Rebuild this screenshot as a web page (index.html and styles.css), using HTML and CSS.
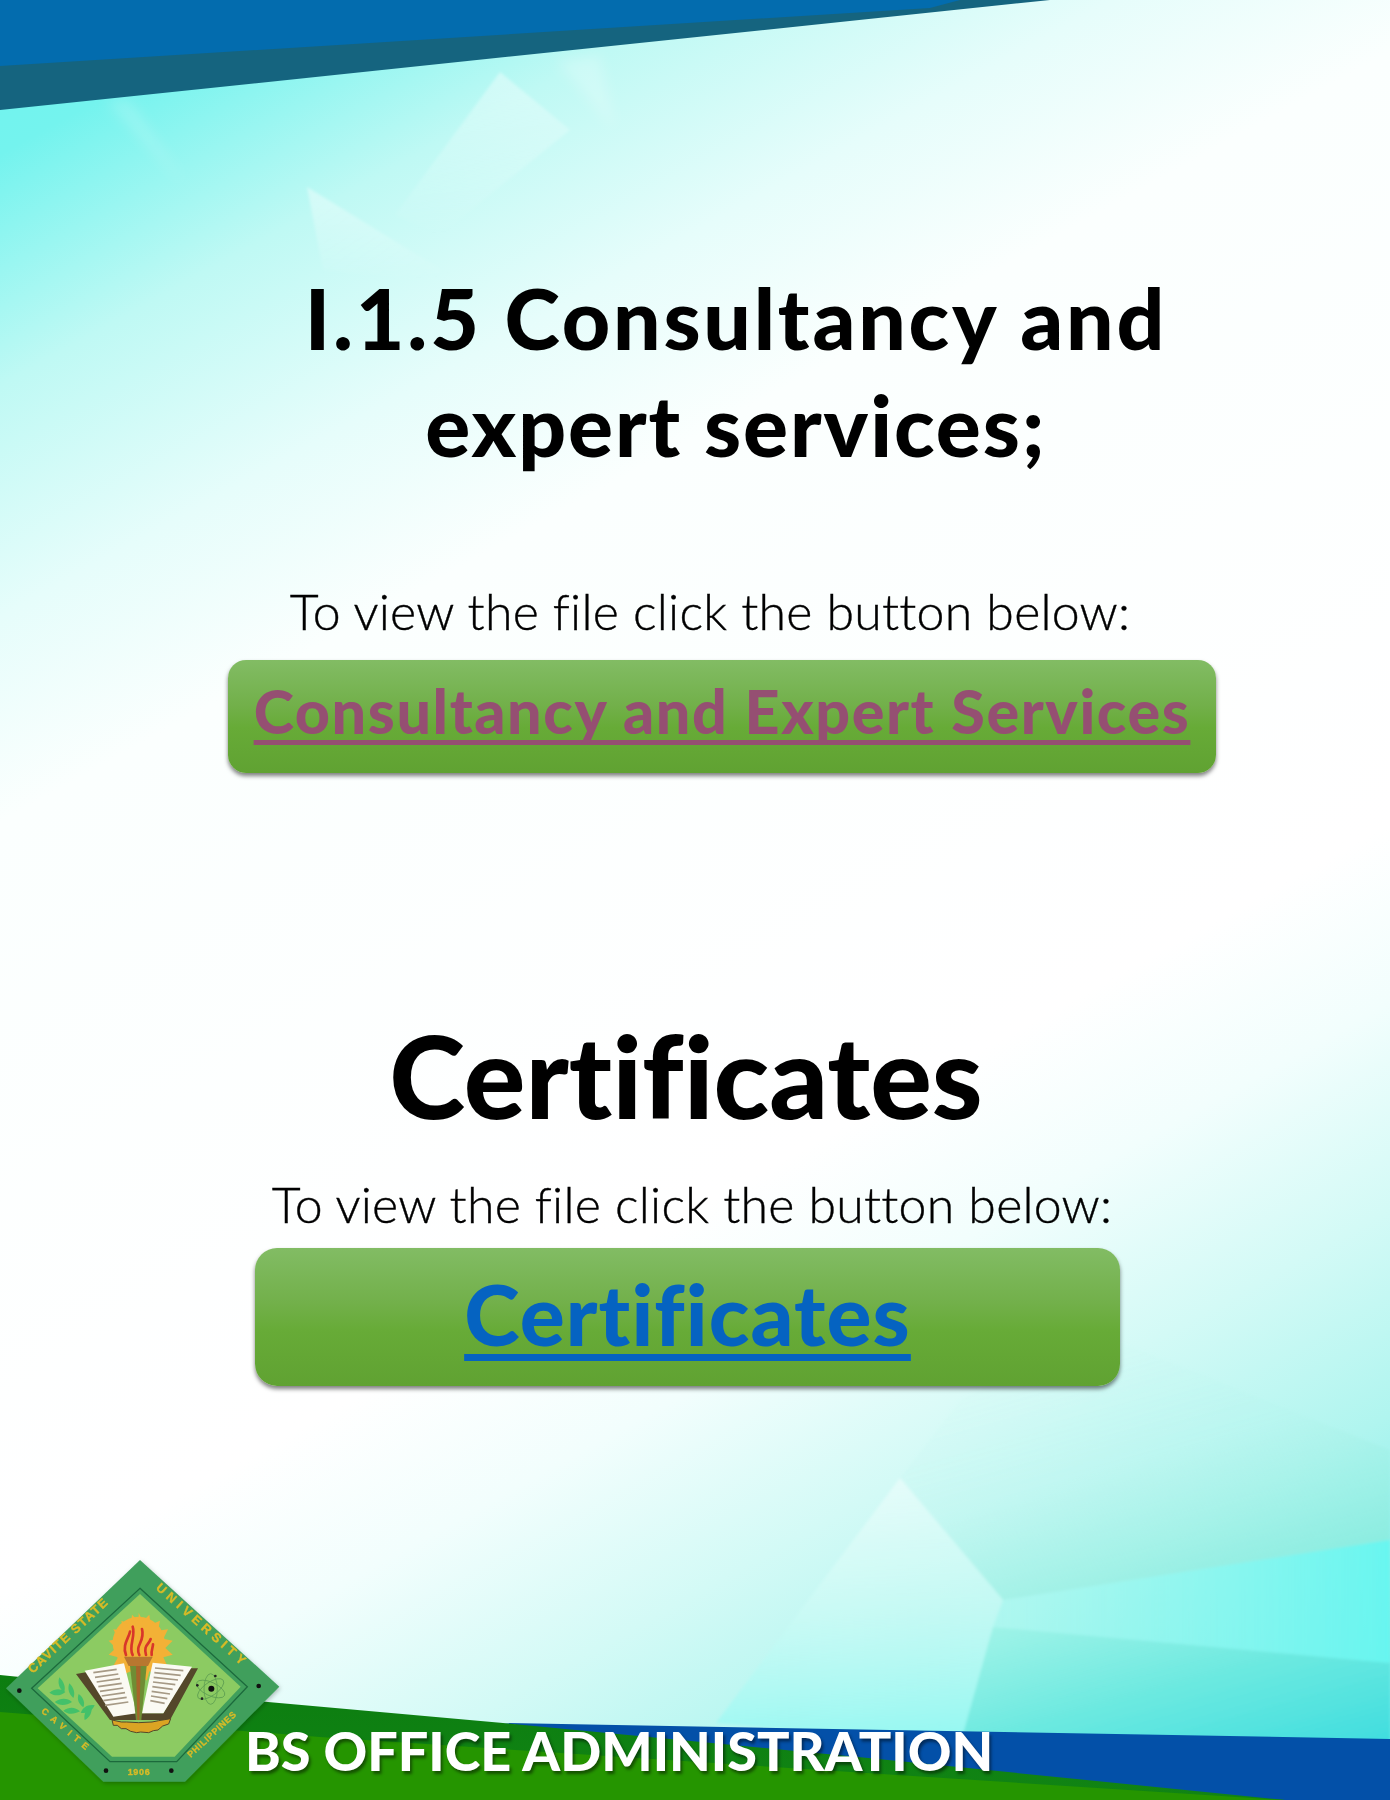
FILE: index.html
```html
<!DOCTYPE html>
<html lang="en">
<head>
<meta charset="utf-8">
<title>Consultancy and expert services</title>
<link rel="stylesheet" href="styles.css">
</head>
<body>
<main class="page">
  <svg class="backdrop" viewBox="0 0 1390 1800" aria-hidden="true">
    <defs>
      <linearGradient id="glowA" x1="0" y1="0" x2="0.1" y2="1">
        <stop offset="0" stop-color="#fff" stop-opacity=".42"/>
        <stop offset="1" stop-color="#fff" stop-opacity="0"/>
      </linearGradient>
      <linearGradient id="tealUpper" x1="0.2" y1="0" x2="0.7" y2="1">
        <stop offset="0" stop-color="#a8f0e4" stop-opacity="0"/>
        <stop offset=".5" stop-color="#a8f0e4" stop-opacity=".12"/>
        <stop offset="1" stop-color="#82ead8" stop-opacity=".7"/>
      </linearGradient>
      <linearGradient id="bandGlow" x1="0" y1="0" x2="1" y2="0">
        <stop offset="0" stop-color="#a8f9ef" stop-opacity=".45"/>
        <stop offset="1" stop-color="#66f6f0" stop-opacity=".95"/>
      </linearGradient>
      <linearGradient id="tealLower" x1="0" y1="0" x2="1" y2="1">
        <stop offset="0" stop-color="#9df3e6" stop-opacity=".75"/>
        <stop offset=".5" stop-color="#6ce9e0"/>
        <stop offset="1" stop-color="#3edddf"/>
      </linearGradient>
      <linearGradient id="leftFacet" x1="0.5" y1="0" x2="0.55" y2="1">
        <stop offset="0" stop-color="#fff" stop-opacity=".4"/>
        <stop offset=".5" stop-color="#cdfcf6" stop-opacity=".55"/>
        <stop offset="1" stop-color="#92f8f2" stop-opacity=".9"/>
      </linearGradient>
      <linearGradient id="greenTop" x1="0" y1="0" x2="0" y2="1">
        <stop offset="0" stop-color="#0c7d10"/>
        <stop offset="1" stop-color="#118414"/>
      </linearGradient>
      <filter id="soften" x="-10%" y="-10%" width="120%" height="120%">
        <feGaussianBlur stdDeviation="1.8"/>
      </filter>
      <filter id="softer" x="-20%" y="-20%" width="140%" height="140%">
        <feGaussianBlur stdDeviation="7"/>
      </filter>
    </defs>
    <g filter="url(#soften)">
      <polygon points="500,72 395,215 440,235 570,130" fill="url(#glowA)"/>
      <polygon points="307,187 323,270 463,283" fill="url(#glowA)"/>
      <polygon points="900,1478 1003,1600 1390,1540 1390,1450 1240,1390 1090,1330 960,1400" fill="url(#tealUpper)"/>
      <polygon points="900,1478 1003,1600 993,1627 960,1745 716,1723" fill="url(#leftFacet)"/>
      <polygon points="993,1627 1390,1663 1390,1745 960,1745" fill="url(#tealLower)"/>
      <polygon points="1003,1600 1390,1540 1390,1663 993,1627" fill="url(#bandGlow)"/>
    </g>
    <g filter="url(#softer)">
      <polygon points="105,100 130,100 185,185" fill="#fff" opacity=".18"/>
      <polygon points="555,60 600,55 615,130" fill="#fff" opacity=".22"/>
    </g>
    <polygon points="1050,0 0,0 0,110" fill="#15647f"/>
    <polygon points="930,8 960,0 0,0 0,66" fill="#036cae"/>
    <polygon points="503,1723 1390,1739 1390,1800 1000,1800" fill="#0350a8"/>
    <polygon points="0,1675 268,1702 503,1723 868,1758 1285,1800 0,1800" fill="url(#greenTop)"/>
    <polygon points="0,1712 320,1737 820,1770 1285,1800 0,1800" fill="#259500"/>
  </svg>

  <h1 class="title"><span class="title-long">I.1.5 Consultancy and</span><br><span class="title-short">expert services;</span></h1>
  <p class="hint hint-first">To view the file click the button below:</p>
  <div class="button button-first"><a class="link link-visited" href="#consultancy">Consultancy and Expert Services</a></div>

  <h2 class="heading">Certificates</h2>
  <p class="hint hint-second">To view the file click the button below:</p>
  <div class="button button-second"><a class="link link-fresh" href="#certificates">Certificates</a></div>

  <footer class="footer">
    <svg class="seal" viewBox="0 0 960 780" role="img" aria-label="Cavite State University seal">
      <defs>
        <path id="arcTopLeft" d="M98 402 L362 158"/>
        <path id="arcTopRight" d="M466 146 L752 402"/>
        <path id="arcLowLeft" d="M122 516 L280 650"/>
        <path id="arcLowRight" d="M572 654 L736 502"/>
        <filter id="sealShadow" x="-10%" y="-10%" width="120%" height="120%">
          <feDropShadow dx="3" dy="5" stdDeviation="6" flood-color="#000" flood-opacity=".25"/>
        </filter>
      </defs>
      <polygon points="420,60 838,440 555,725 310,725 18,445" fill="#3f9f5c" filter="url(#sealShadow)"/>
      <polygon points="420,145 742,440 530,665 330,665 95,445" fill="none" stroke="#1c6a3c" stroke-width="4"/>
      <polygon points="420,162 722,440 524,650 336,650 113,445" fill="#8ccb62"/>
      <circle cx="58" cy="452" r="7" fill="#111"/>
      <circle cx="776" cy="438" r="7" fill="#111"/>
      <circle cx="318" cy="692" r="7" fill="#111"/>
      <circle cx="514" cy="692" r="7" fill="#111"/>
      <text class="seal-text"><textPath href="#arcTopLeft">CAVITE STATE</textPath></text>
      <text class="seal-text seal-wide"><textPath href="#arcTopRight">UNIVERSITY</textPath></text>
      <text class="seal-text seal-small seal-spread"><textPath href="#arcLowLeft">CAVITE</textPath></text>
      <text class="seal-text seal-small"><textPath href="#arcLowRight">PHILIPPINES</textPath></text>
      <text class="seal-text seal-small" x="383" y="704">1906</text>

      <g fill="#f3b136">
        <circle cx="416" cy="308" r="78"/>
        <path d="M416 218l12 26 20-20 4 30 28-12-6 30 30-4-14 28 28 6-22 22 22 20-28 8 12 26-30-2 4 30-28-12-8 28-20-22-20 22-8-28-26 12 4-30-30 2 14-26-28-8 22-20-22-22 28-6-14-28 30 4-6-30 28 12 4-30 20 20z"/>
      </g>
      <g fill="none" stroke="#d8362a" stroke-width="8" stroke-linecap="round">
        <path d="M378 345c-12-30 8-50 12-70"/>
        <path d="M398 345c-14-26 10-55 0-85"/>
        <path d="M418 345c-14-30 18-40 8-78"/>
        <path d="M438 345c-8-30 8-30 14-48"/>
        <path d="M455 345c-2-14 4-22 4-32"/>
      </g>
      <polygon points="228,402 330,540 510,540 594,385 570,385 490,520 340,520 262,396" fill="#54472a"/>
      <polygon points="254,392 372,370 410,520 340,530" fill="#fbfaf3"/>
      <polygon points="458,368 576,380 490,520 426,520" fill="#fbfaf3"/>
      <g stroke="#a69a86" stroke-width="5">
        <path d="M280 398 350 388M285 412 355 402M290 426 360 416M295 440 365 430M300 454 370 444M305 468 375 458M310 482 380 472M315 496 385 486"/>
        <path d="M465 384 550 392M463 398 542 406M461 412 534 420M459 426 526 434M457 440 518 448M455 454 510 462M453 468 502 476M451 482 494 490"/>
      </g>
      <polygon points="372,350 458,350 444,378 386,378" fill="#b8772f"/>
      <polygon points="390,378 440,378 424,540 408,540" fill="#6f8d34"/>
      <polygon points="408,378 422,378 418,540 412,540" fill="#a5652a"/>
      <path d="M336 540l28 6 16 0 36 2 40-2 20-4 36-6-6 16-18 6-14 12-14 2-14 6-24-2-12 2-18-4-14-8-14 0-12-10-12 0z" fill="#dba423" stroke="#54472a" stroke-width="3"/>
      <g fill="#43c16a">
        <path d="M148 458c20-14 34-12 48-2-16 14-34 12-48 2z"/>
        <path d="M164 486c20-14 38-12 52 0-18 12-38 12-52 0z"/>
        <path d="M190 512c20-14 36-10 50 2-18 10-38 10-50-2z"/>
        <path d="M178 412c14 14 20 30 14 46-14-12-20-28-14-46z"/>
        <path d="M208 430c14 14 18 30 12 44-14-12-18-28-12-44z"/>
        <path d="M236 462c14 10 20 26 14 40-14-10-20-24-14-40z"/>
        <path d="M284 496c-18-4-34 4-42 22 20 4 34-4 42-22z"/>
        <path d="M254 540c-4-16 4-34 20-42 4 18-4 34-20 42z"/>
      </g>
      <g fill="none" stroke="#5f9f52" stroke-width="2.5">
        <ellipse cx="632" cy="447" rx="46" ry="20" transform="rotate(25 632 447)"/>
        <ellipse cx="632" cy="447" rx="46" ry="20" transform="rotate(-35 632 447)"/>
        <ellipse cx="632" cy="447" rx="46" ry="20" transform="rotate(90 632 447)"/>
      </g>
      <circle cx="634" cy="446" r="9" fill="#111"/>
      <circle cx="646" cy="408" r="4" fill="#222"/>
      <circle cx="592" cy="436" r="4" fill="#222"/>
      <circle cx="606" cy="476" r="4" fill="#222"/>
    </svg>
    <div class="banner">BS OFFICE ADMINISTRATION</div>
  </footer>
</main>
</body>
</html>
```
FILE: styles.css
```css
html, body {
  margin: 0;
  padding: 0;
}

.page {
  position: relative;
  width: 1390px;
  height: 1800px;
  overflow: hidden;
  display: flex;
  flex-direction: column;
  padding-top: 264px;
  box-sizing: border-box;
  font-family: "Lato", "Liberation Sans", sans-serif;
  font-variant-ligatures: none;
  color: #000;
  background: linear-gradient(151deg, #6ff3ee 0%, #74f3ee 6%, #bff9f4 15%, #e6fdfb 24%, #fbfffe 32%, #ffffff 62%, #f2fefd 69%, #d3faf6 77%, #b0f5ef 85%, #70eae7 96%, #4ddfe0 100%);
}

.backdrop {
  position: absolute;
  inset: 0;
  width: 100%;
  height: 100%;
}

.title,
.heading,
.hint,
.button,
.footer {
  position: relative;
}

.title {
  margin: 0;
  width: 1390px;
  padding-left: 82px;
  box-sizing: border-box;
  font-size: 84px;
  line-height: 107px;
  font-weight: 900;
  text-align: center;
}

.title-long {
  letter-spacing: 2.8px;
}

.title-short {
  letter-spacing: 1.9px;
}

.hint {
  margin: 0;
  font-size: 50px;
  line-height: 60px;
  font-weight: 300;
  letter-spacing: .25px;
  text-align: center;
  white-space: nowrap;
  -webkit-text-stroke: .4px #000;
}

.hint-first {
  margin-top: 103px;
  margin-left: 30px;
}

.hint-second {
  margin-top: 31px;
  margin-left: -6px;
}

.button {
  display: flex;
  align-items: center;
  justify-content: center;
  box-sizing: border-box;
  background: linear-gradient(180deg, #82bc64 0%, #72b04a 40%, #67ab37 60%, #60a232 100%);
  box-shadow: 0 3px 4px rgba(0, 0, 0, .5);
}

.button-first {
  width: 988px;
  height: 113px;
  margin-top: 19px;
  margin-left: 228px;
  padding-bottom: 12px;
  border-radius: 18px;
}

.button-second {
  width: 865px;
  height: 138px;
  margin-top: 14px;
  margin-left: 255px;
  padding-bottom: 7px;
  border-radius: 22px;
}

.link {
  font-weight: 900;
  text-decoration-line: underline;
  text-decoration-skip-ink: none;
}

.link-visited {
  color: #954f72;
  font-size: 61px;
  letter-spacing: 1.6px;
  text-decoration-thickness: 5px;
  text-underline-offset: 6px;
}

.link-fresh {
  color: #0563c1;
  font-size: 84px;
  letter-spacing: 1.1px;
  text-decoration-thickness: 7px;
  text-underline-offset: 8px;
}

.heading {
  margin: 232px 0 0;
  font-size: 115px;
  line-height: 138px;
  font-weight: 900;
  text-align: center;
  margin-left: -18px;
}

.footer {
  margin-top: auto;
  height: 260px;
  box-sizing: border-box;
  display: flex;
  align-items: flex-end;
  padding: 0 0 19px 245px;
}

.seal {
  position: absolute;
  left: 0;
  top: 0;
  width: 320px;
  height: 260px;
}

.seal-text {
  font-family: "Liberation Sans", sans-serif;
  font-size: 38px;
  font-weight: 700;
  fill: #d8bb26;
  stroke: #d8bb26;
  stroke-width: 1px;
  letter-spacing: 4px;
}

.seal-wide {
  letter-spacing: 13px;
}

.seal-small {
  font-size: 27px;
  letter-spacing: 2px;
}

.seal-spread {
  letter-spacing: 16px;
}

.banner {
  position: relative;
  font-size: 54px;
  line-height: 60px;
  font-weight: 900;
  color: #fff;
  white-space: nowrap;
  text-shadow: 2px 3px 3px rgba(0, 0, 0, .45);
}
```
